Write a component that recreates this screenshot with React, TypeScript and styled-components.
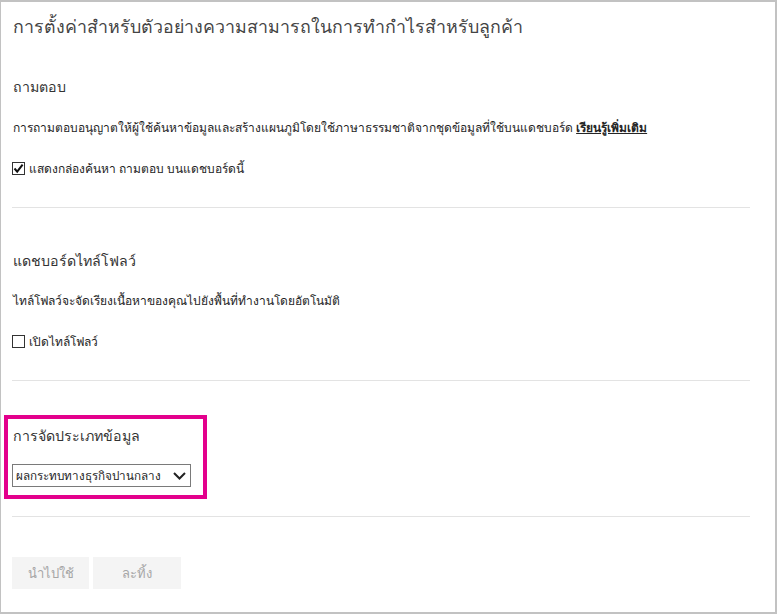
import styled, { createGlobalStyle } from "styled-components";

const GlobalStyle = createGlobalStyle`
  html, body {
    margin: 0;
    padding: 0;
    background: #ffffff;
  }
  body {
    font-family: "Noto Sans", "DejaVu Sans", sans-serif;
    color: #252525;
  }
`;

const Frame = styled.div`
  box-sizing: border-box;
  width: 777px;
  height: 614px;
  border: 2px solid #c2c2c2;
  border-left-width: 1px;
  padding: 0 25px 0 11px;
  background: #ffffff;
  overflow: hidden;
`;

const Title = styled.h1`
  margin: 10px 0 0 1px;
  font-size: 17.8px;
  line-height: 28px;
  font-weight: 300;
  color: #444444;
  white-space: nowrap;
`;

const Section = styled.section<{ $top: number }>`
  display: flex;
  flex-direction: column;
  align-items: flex-start;
  margin-top: ${(p) => p.$top}px;
`;

const Heading = styled.h2<{ $gap?: number }>`
  margin: 0 0 ${(p) => p.$gap ?? 20}px 1px;
  font-size: 14.2px;
  line-height: 24px;
  font-weight: 400;
  color: #333333;
`;

const Description = styled.p`
  margin: 0 0 22px 1px;
  font-size: 12px;
  line-height: 18px;
  color: #252525;
  white-space: nowrap;
`;

const LearnMore = styled.a`
  color: #252525;
  font-weight: 700;
  text-decoration: underline;
  cursor: pointer;
`;

const CheckRow = styled.label`
  display: flex;
  align-items: center;
  gap: 4px;
  height: 18px;
  font-size: 12px;
  color: #252525;
  cursor: pointer;
`;

const Box = styled.span`
  display: inline-flex;
  align-items: center;
  justify-content: center;
  box-sizing: border-box;
  width: 13px;
  height: 13px;
  border: 1px solid #333333;
  background: #ffffff;
`;

const Divider = styled.hr`
  width: 100%;
  margin: 30px 0 0;
  border: none;
  border-top: 1px solid #e3e3e3;
`;

const Highlight = styled.div`
  box-sizing: border-box;
  width: 203px;
  margin: 34px 0 0 -8px;
  padding: 5px 4px 8px 4px;
  border: 4px solid #e3008c;
`;

const SelectBox = styled.div`
  box-sizing: border-box;
  display: flex;
  align-items: center;
  justify-content: space-between;
  width: 179px;
  height: 23px;
  padding: 0 4px 0 3px;
  border: 1px solid #7a7a7a;
  font-size: 11.7px;
  color: #252525;
  white-space: nowrap;
`;

const Actions = styled.div`
  display: flex;
  gap: 4px;
  margin-top: 40px;
`;

const Button = styled.button<{ $width: number }>`
  width: ${(p) => p.$width}px;
  height: 32px;
  border: none;
  background: #f4f4f4;
  color: #a6a6a6;
  font-family: inherit;
  font-size: 13px;
`;

const Check = ({ checked }: { checked: boolean }) => (
  <Box>
    {checked && (
      <svg width="11" height="11" viewBox="0 0 11 11">
        <path d="M1.5 5.5 L4.2 8.6 L9.6 1.6" fill="none" stroke="#111" strokeWidth="2" />
      </svg>
    )}
  </Box>
);

const App = () => {
  return (
    <>
      <GlobalStyle />
      <Frame>
        <Title>การตั้งค่าสำหรับตัวอย่างความสามารถในการทำกำไรสำหรับลูกค้า</Title>

        <Section $top={35}>
          <Heading>ถามตอบ</Heading>
          <Description>
            การถามตอบอนุญาตให้ผู้ใช้ค้นหาข้อมูลและสร้างแผนภูมิโดยใช้ภาษาธรรมชาติจากชุดข้อมูลที่ใช้บนแดชบอร์ด{" "}
            <LearnMore>เรียนรู้เพิ่มเติม</LearnMore>
          </Description>
          <CheckRow>
            <Check checked />
            แสดงกล่องค้นหา ถามตอบ บนแดชบอร์ดนี้
          </CheckRow>
          <Divider />
        </Section>

        <Section $top={41}>
          <Heading $gap={19}>แดชบอร์ดไทล์โฟลว์</Heading>
          <Description>ไทล์โฟลว์จะจัดเรียงเนื้อหาของคุณไปยังพื้นที่ทำงานโดยอัตโนมัติ</Description>
          <CheckRow>
            <Check checked={false} />
            เปิดไทล์โฟลว์
          </CheckRow>
          <Divider />
        </Section>

        <Highlight>
          <Heading $gap={16}>การจัดประเภทข้อมูล</Heading>
          <SelectBox>
            ผลกระทบทางธุรกิจปานกลาง
            <svg width="13" height="8" viewBox="0 0 13 8">
              <path d="M1 1 L6.5 6.5 L12 1" fill="none" stroke="#222" strokeWidth="2" />
            </svg>
          </SelectBox>
        </Highlight>

        <Section $top={17}>
          <Divider style={{ marginTop: 0 }} />
        </Section>

        <Actions>
          <Button $width={77}>นำไปใช้</Button>
          <Button $width={88}>ละทิ้ง</Button>
        </Actions>
      </Frame>
    </>
  );
};

export default App;
